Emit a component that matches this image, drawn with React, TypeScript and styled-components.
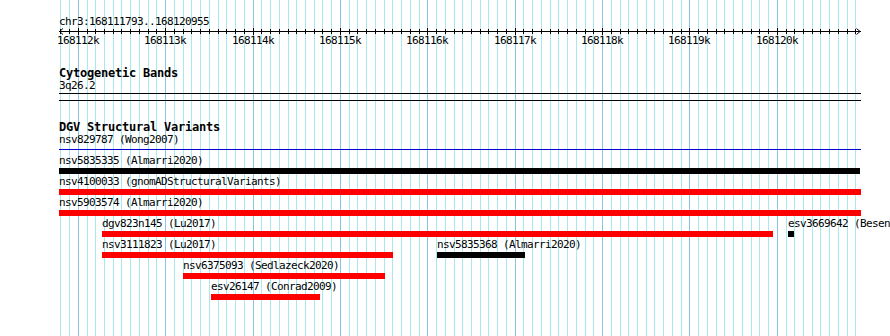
import React from "react";
import styled, { createGlobalStyle } from "styled-components";

const GlobalStyle = createGlobalStyle`
  html, body { margin: 0; padding: 0; background: #ffffff; }
  body { font-family: "DejaVu Sans Mono", "Liberation Mono", monospace; color: #000; }
`;

const LEFT = 59;
const RIGHT = 861;
const TRACK_W = RIGHT - LEFT;
const X0 = 78.3; // position of 168112k
const STEP = 8.7375; // pixels per 100 bp
const gx = (i: number) => Math.floor(X0 + STEP * i);

const Page = styled.div`
  position: relative;
  width: 890px;
  height: 336px;
  overflow: hidden;
  background: #ffffff;
`;

const GridLayer = styled.svg`
  position: absolute;
  left: 0;
  top: 0;
  width: 890px;
  height: 336px;
  z-index: 0;
`;

const Content = styled.div`
  position: relative;
  z-index: 1;
  padding-left: ${LEFT}px;
  width: ${TRACK_W}px;
`;

const SmallText = styled.div`
  font-family: "DejaVu Sans Mono", "Liberation Mono", monospace;
  font-size: 11px;
  line-height: 12px;
  height: 12px;
  letter-spacing: -0.622px;
  white-space: nowrap;
`;

const Title = styled(SmallText)<{ $top?: number }>`
  margin-top: ${(p) => p.$top ?? 0}px;
`;

const Heading = styled.div<{ $top: number }>`
  margin-top: ${(p) => p.$top}px;
  font-family: "DejaVu Sans Mono", "Liberation Mono", monospace;
  font-weight: bold;
  font-size: 12px;
  line-height: 13px;
  height: 13px;
  letter-spacing: -0.224px;
  white-space: nowrap;
`;

const Axis = styled.svg`
  display: block;
  width: ${TRACK_W}px;
  height: 7px;
`;

const TickRow = styled.div`
  position: relative;
  height: 12px;
`;

const TickLabel = styled(SmallText)`
  position: absolute;
  top: 0;
  width: 42px;
  text-align: left;
`;

const BandBox = styled.div`
  margin-top: 1px;
  box-sizing: border-box;
  height: 8px;
  width: ${TRACK_W}px;
  border-top: 1px solid #000;
  border-bottom: 1px solid #000;
`;

const Lane = styled.div`
  position: relative;
  height: 21px;
`;

const Feature = styled.div`
  position: absolute;
  top: 0;
`;

const FeatureLabel = styled(SmallText)``;

const Bar = styled.div<{ $color: string; $thin?: boolean }>`
  position: absolute;
  left: 0;
  top: ${(p) => (p.$thin ? 15 : 13)}px;
  height: ${(p) => (p.$thin ? 1 : 6)}px;
  background: ${(p) => p.$color};
`;

type Feat = { label: string; x1: number; x2: number; color: string; thin?: boolean };

const lanes: Feat[][] = [
  [{ label: "nsv829787 (Wong2007)", x1: 59, x2: 861, color: "#0000cd", thin: true }],
  [{ label: "nsv5835335 (Almarri2020)", x1: 59, x2: 860, color: "#000000" }],
  [{ label: "nsv4100033 (gnomADStructuralVariants)", x1: 59, x2: 861, color: "#ff0000" }],
  [{ label: "nsv5903574 (Almarri2020)", x1: 59, x2: 861, color: "#ff0000" }],
  [
    { label: "dgv823n145 (Lu2017)", x1: 102, x2: 773, color: "#ff0000" },
    { label: "esv3669642 (Besenbacher2016)", x1: 788, x2: 794, color: "#000000" },
  ],
  [
    { label: "nsv3111823 (Lu2017)", x1: 102, x2: 393, color: "#ff0000" },
    { label: "nsv5835368 (Almarri2020)", x1: 437, x2: 525, color: "#000000" },
  ],
  [{ label: "nsv6375093 (Sedlazeck2020)", x1: 183, x2: 385, color: "#ff0000" }],
  [{ label: "esv26147 (Conrad2009)", x1: 211, x2: 320, color: "#ff0000" }],
];

const gridIdx: number[] = [];
for (let i = -2; i <= 89; i++) gridIdx.push(i);

const majors = [0, 1, 2, 3, 4, 5, 6, 7, 8];

export default function App() {
  return (
    <>
      <GlobalStyle />
      <Page>
        <GridLayer viewBox="0 0 890 336">
          {gridIdx.map((i) => {
            const x = gx(i) + 0.5;
            const major = i % 10 === 0;
            return (
              <line
                key={i}
                x1={x}
                x2={x}
                y1={0}
                y2={336}
                stroke={major ? "#8cc3e9" : "#aae8ef"}
                strokeWidth={1}
              />
            );
          })}
        </GridLayer>
        <Content>
          <Title $top={16}>chr3:168111793..168120955</Title>
          <Axis viewBox={`0 0 ${TRACK_W} 7`}>
            <line x1={0} x2={TRACK_W} y1={3.5} y2={3.5} stroke="#000" strokeWidth={1} />
            <polyline points="4,0.5 0.5,3.5 4,6.5" fill="none" stroke="#000" strokeWidth={1} />
            <polyline
              points={`${TRACK_W - 4.5},0.5 ${TRACK_W - 1},3.5 ${TRACK_W - 4.5},6.5`}
              fill="none"
              stroke="#000"
              strokeWidth={1}
            />
            {gridIdx.map((i) => {
              const x = gx(i) - LEFT + 0.5;
              const major = i % 10 === 0;
              return (
                <line
                  key={i}
                  x1={x}
                  x2={x}
                  y1={major ? 0 : 1}
                  y2={major ? 7 : 6}
                  stroke="#000"
                  strokeWidth={1}
                />
              );
            })}
          </Axis>
          <TickRow>
            {majors.map((k) => (
              <TickLabel key={k} style={{ left: gx(k * 10) - LEFT - 21 }}>
                {`1681${12 + k}k`}
              </TickLabel>
            ))}
          </TickRow>

          <Heading $top={20}>Cytogenetic Bands</Heading>
          <SmallText>3q26.2</SmallText>
          <BandBox />

          <Heading $top={20}>DGV Structural Variants</Heading>
          {lanes.map((lane, li) => (
            <Lane key={li}>
              {lane.map((f) => (
                <Feature key={f.label} style={{ left: f.x1 - LEFT }}>
                  <FeatureLabel>{f.label}</FeatureLabel>
                  <Bar $color={f.color} $thin={f.thin} style={{ width: f.x2 - f.x1 }} />
                </Feature>
              ))}
            </Lane>
          ))}
        </Content>
      </Page>
    </>
  );
}
